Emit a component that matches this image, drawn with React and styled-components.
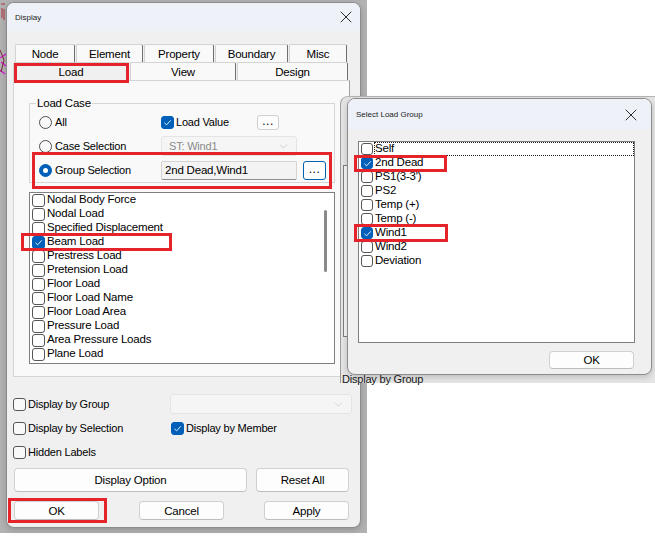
import styled, { createGlobalStyle, css } from 'styled-components';
import { X, ChevronDown } from 'lucide-react';

const GlobalStyle = createGlobalStyle`
  * { box-sizing: border-box; }
  html, body { margin: 0; padding: 0; background: #ffffff; }
  body {
    font-family: "Liberation Sans", Arial, sans-serif;
    font-size: 11px;
    letter-spacing: -0.2px;
    color: #000;
  }
`;

const RED = '#e4232b';

// red annotation frame drawn over a part
const marked = css`
  position: relative;
  ${p => p.$mark && css`
    &::after {
      content: '';
      position: absolute;
      top: ${p.$mark.top}px;
      bottom: ${p.$mark.bottom}px;
      left: ${p.$mark.left}px;
      ${p.$mark.width != null ? `width: ${p.$mark.width}px;` : `right: ${p.$mark.right}px;`}
      border: 3px solid ${RED};
      pointer-events: none;
      z-index: 5;
    }
  `}
`;

const Desktop = styled.div`
  position: relative;
  width: 655px;
  height: 543px;
  background: #ffffff;
  overflow: hidden;
`;

const Backdrop = styled.div`
  position: absolute;
  left: 0;
  top: 0;
  width: 367px;
  height: 533px;
  background: #b2b2b2;
`;

const Scribble = styled.svg`
  position: absolute;
  left: 0;
  top: 0;
`;

const Window = styled.div`
  position: absolute;
  left: ${p => p.$x}px;
  top: ${p => p.$y}px;
  width: ${p => p.$w}px;
  height: ${p => p.$h}px;
  z-index: ${p => p.$z};
  background: #f0f0f0;
  border: 1px solid #8c8c8c;
  border-radius: 8px;
  overflow: hidden;
  display: flex;
  flex-direction: column;
  box-shadow: 0 2px 6px rgba(0, 0, 0, 0.18);
`;

const BehindWindow = styled.div`
  position: absolute;
  left: 340px;
  top: 96px;
  width: 315px;
  height: 287px;
  z-index: 2;
  background: #e5e5e5;
  border-left: 1px solid #9d9d9d;
  border-top: 1px solid #b5b5b5;
  border-top-left-radius: 8px;
  display: flex;
  flex-direction: column;
`;

const GhostList = styled.div`
  margin: 68px 0 0 2px;
  width: 20px;
  height: 172px;
  border: 1px solid #7d7d7d;
  background: #f7f7f7;
`;

const GhostLabel = styled.div`
  margin-top: auto;
  margin-bottom: -3px;
  line-height: 14px;
  padding-left: 1px;
  color: #1a1a1a;
`;

const TitleBar = styled.div`
  flex: none;
  height: ${p => p.$h}px;
  background: #eef2f8;
  display: flex;
  align-items: center;
  justify-content: space-between;
  padding: 0 ${p => p.$pr}px 0 8px;
  font-size: 8px;
  letter-spacing: 0;
  color: #222;
`;

const Body = styled.div`
  padding: 13px 8px 0 6px;
  display: flex;
  flex-direction: column;
`;

const TabRow = styled.div`
  display: flex;
  gap: 1px;
  height: 18px;
  margin-left: ${p => p.$indent || 0}px;
`;

const Tab = styled.div`
  ${marked}
  flex: none;
  width: ${p => p.$w}px;
  height: 18px;
  display: flex;
  align-items: center;
  justify-content: center;
  background: ${p => (p.$active ? '#f0f0f0' : '#f9f9f9')};
  border: 1px solid #d3d3d3;
  border-right: 1px solid #6e6e6e;
  border-bottom: none;
  border-radius: 2px 2px 0 0;
  font-size: 11.5px;
`;

const Panel = styled.div`
  width: 337px;
  height: 297px;
  background: #f9f9f9;
  border: 1px solid #d4d4d4;
  border-right-color: #a0a0a0;
  padding: 15px 0 0 15px;
`;

const Group = styled.fieldset`
  width: 306px;
  margin: 0;
  padding: 0 0 0 9px;
  border: 1px solid #d6d6d6;
  border-radius: 0;
`;

const Legend = styled.legend`
  margin-left: -3px;
  padding: 0 1px;
  line-height: 14px;
  font-size: 11.5px;
`;

const Row = styled.div`
  ${marked}
  display: flex;
  align-items: center;
  height: ${p => p.$h || 24}px;
`;

const LeftCell = styled.div`
  flex: none;
  width: ${p => p.$w}px;
  display: flex;
  align-items: center;
  gap: ${p => p.$gap || 3}px;
`;

const RightCell = styled.div`
  flex: none;
  width: ${p => p.$w}px;
  display: flex;
  align-items: center;
  justify-content: ${p => p.$between ? 'space-between' : 'flex-start'};
  gap: ${p => p.$gap || 0}px;
`;

const Inline = styled.div`
  display: flex;
  align-items: center;
  gap: ${p => p.$gap || 2}px;
`;

const RadioDot = styled.span`
  flex: none;
  width: 13px;
  height: 13px;
  border-radius: 50%;
  border: 1px solid ${p => (p.$on ? '#005fb8' : '#4f4f4f')};
  background: ${p => (p.$on ? '#005fb8' : 'transparent')};
  display: inline-flex;
  align-items: center;
  justify-content: center;
  &::after {
    content: '';
    display: ${p => (p.$on ? 'block' : 'none')};
    width: 5px;
    height: 5px;
    border-radius: 50%;
    background: #fff;
  }
`;

const Box = styled.span`
  flex: none;
  width: ${p => p.$size}px;
  height: ${p => p.$size}px;
  border-radius: 3px;
  border: 1px solid ${p => (p.$on ? '#005fb8' : '#555555')};
  background: ${p => (p.$on ? '#005fb8' : 'rgba(255,255,255,0.6)')};
  display: inline-flex;
  align-items: center;
  justify-content: center;
`;

const CheckBox = ({ on, size = 13 }) => (
  <Box $on={on} $size={size}>
    {on && (
      <svg width="9" height="9" viewBox="0 0 10 10">
        <path d="M1.6 5.3 L4 7.6 L8.6 2.6" fill="none" stroke="#fff" strokeWidth="1" />
      </svg>
    )}
  </Box>
);

const SmallButton = styled.div`
  flex: none;
  width: ${p => p.$w}px;
  height: ${p => p.$h}px;
  border-radius: 3px;
  background: #fdfdfd;
  border: ${p => (p.$focus ? '1.5px solid #0063b1' : '1px solid #cfcfcf')};
  display: flex;
  align-items: center;
  justify-content: center;
  font-size: 12px;
  letter-spacing: 0.5px;
  line-height: 1;
  padding-bottom: 2px;
`;

const Combo = styled.div`
  flex: none;
  width: ${p => p.$w}px;
  height: 20px;
  border-radius: 3px;
  background: #f5f5f5;
  border: 1px solid #e4e4e4;
  color: #8a8a8a;
  display: flex;
  align-items: center;
  justify-content: space-between;
  padding: 0 6px 0 7px;
`;

const TextBox = styled.div`
  flex: none;
  width: 136px;
  height: 19px;
  border-radius: 2px;
  background: #f3f3f3;
  border: 1px solid #d3d3d3;
  border-bottom-color: #8d8d8d;
  display: flex;
  align-items: center;
  padding-left: 3px;
  font-size: 11.5px;
`;

const List = styled.div`
  width: ${p => p.$w}px;
  height: ${p => p.$h}px;
  margin: ${p => p.$m};
  background: #ffffff;
  border: 1px solid #7f7f7f;
  display: flex;
`;

const Items = styled.div`
  flex: 1;
  display: flex;
  flex-direction: column;
`;

const Item = styled.div`
  ${marked}
  height: 14px;
  display: flex;
  align-items: center;
  padding-left: 2px;
  gap: 1px;
  font-size: 11.5px;
`;

const ItemText = styled.span`
  flex: ${p => (p.$focus ? 1 : 'none')};
  height: 14px;
  line-height: 13px;
  padding-left: 1px;
  outline: ${p => (p.$focus ? '1px dotted #222' : 'none')};
  outline-offset: -1px;
`;

const ScrollTrack = styled.div`
  flex: none;
  width: 17px;
  padding: 17px 0 0 7px;
`;

const Thumb = styled.div`
  width: 3px;
  height: 62px;
  border-radius: 2px;
  background: #8a8a8a;
`;

const Options = styled.div`
  margin-top: 15px;
  display: flex;
  flex-direction: column;
`;

const ButtonRow = styled.div`
  display: flex;
  margin-top: ${p => p.$mt}px;
  padding-left: 1px;
  width: 336px;
  justify-content: space-between;
`;

const Button = styled.div`
  ${marked}
  flex: none;
  width: ${p => p.$w}px;
  height: ${p => p.$h}px;
  background: #fdfdfd;
  border: 1px solid #d0d0d0;
  border-bottom-color: #bdbdbd;
  border-radius: 4px;
  display: flex;
  align-items: center;
  justify-content: center;
  font-size: 11.5px;
`;

const DialogFoot = styled.div`
  display: flex;
  justify-content: flex-end;
  padding: 8px 17px 0 0;
`;

const CloseIcon = () => <X size={20} strokeWidth={1.1} color="#1b1b1b" />;

const loadItems = [
  'Nodal Body Force',
  'Nodal Load',
  'Specified Displacement',
  'Beam Load',
  'Prestress Load',
  'Pretension Load',
  'Floor Load',
  'Floor Load Name',
  'Floor Load Area',
  'Pressure Load',
  'Area Pressure Loads',
  'Plane Load',
];

const groups = [
  { name: 'Self', focus: true },
  { name: '2nd Dead', on: true, mark: { top: -1, bottom: -2, left: -5, width: 87 } },
  { name: "PS1(3-3')" },
  { name: 'PS2' },
  { name: 'Temp (+)' },
  { name: 'Temp (-)' },
  { name: 'Wind1', on: true, mark: { top: -2, bottom: -2, left: -5, width: 88 } },
  { name: 'Wind2' },
  { name: 'Deviation' },
];

const MainDialog = () => (
  <Window $x={6} $y={2} $w={355} $h={526} $z={1}>
    <TitleBar $h={28} $pr={4}>
      <span>Display</span>
      <CloseIcon />
    </TitleBar>
    <Body>
      <TabRow $indent={2}>
        <Tab $w={60}>Node</Tab>
        <Tab $w={67}>Element</Tab>
        <Tab $w={70}>Property</Tab>
        <Tab $w={73}>Boundary</Tab>
        <Tab $w={58}>Misc</Tab>
      </TabRow>
      <TabRow>
        <Tab $w={116} $active $mark={{ top: 0, bottom: -3, left: 0, right: -1 }}>Load</Tab>
        <Tab $w={106}>View</Tab>
        <Tab $w={111}>Design</Tab>
      </TabRow>
      <Panel>
        <Group>
          <Legend>Load Case</Legend>
          <Row>
            <LeftCell $w={122}><RadioDot />All</LeftCell>
            <RightCell $w={118} $between>
              <Inline><CheckBox on />Load Value</Inline>
              <SmallButton $w={22} $h={15}>...</SmallButton>
            </RightCell>
          </Row>
          <Row>
            <LeftCell $w={122}><RadioDot />Case Selection</LeftCell>
            <Combo $w={136}>
              <span>ST: Wind1</span>
              <ChevronDown size={13} strokeWidth={1} color="#b5b5b5" />
            </Combo>
          </Row>
          <Row $mark={{ top: -6, bottom: -7, left: -7, right: 2 }}>
            <LeftCell $w={122}><RadioDot $on />Group Selection</LeftCell>
            <RightCell $w={165} $gap={6}>
              <TextBox>2nd Dead,Wind1</TextBox>
              <SmallButton $w={23} $h={19} $focus>...</SmallButton>
            </RightCell>
          </Row>
        </Group>
        <List $w={306} $h={172} $m="9px 0 0 0">
          <Items>
            {loadItems.map(name => (
              <Item
                key={name}
                $mark={name === 'Beam Load' ? { top: -2, bottom: -2, left: -9, width: 145 } : null}
              >
                <CheckBox on={name === 'Beam Load'} />
                <ItemText>{name}</ItemText>
              </Item>
            ))}
          </Items>
          <ScrollTrack>
            <Thumb />
          </ScrollTrack>
        </List>
      </Panel>
      <Options>
        <Row>
          <LeftCell $w={157} $gap={2}><CheckBox />Display by Group</LeftCell>
          <Combo $w={182}>
            <span />
            <ChevronDown size={13} strokeWidth={1} color="#b5b5b5" />
          </Combo>
        </Row>
        <Row>
          <LeftCell $w={158} $gap={2}><CheckBox />Display by Selection</LeftCell>
          <Inline><CheckBox on />Display by Member</Inline>
        </Row>
        <Row>
          <LeftCell $w={158} $gap={2}><CheckBox />Hidden Labels</LeftCell>
        </Row>
      </Options>
      <ButtonRow $mt={4}>
        <Button $w={233} $h={24}>Display Option</Button>
        <Button $w={93} $h={24}>Reset All</Button>
      </ButtonRow>
      <ButtonRow $mt={9}>
        <Button $w={85} $h={19} $mark={{ top: -4, bottom: -4, left: -7, right: -9 }}>OK</Button>
        <Button $w={85} $h={19}>Cancel</Button>
        <Button $w={85} $h={19}>Apply</Button>
      </ButtonRow>
    </Body>
  </Window>
);

const GroupDialog = () => (
  <Window $x={347} $y={98} $w={305} $h={277} $z={3}>
    <TitleBar $h={31} $pr={10}>
      <span>Select Load Group</span>
      <CloseIcon />
    </TitleBar>
    <List $w={277} $h={202} $m="11px 0 0 10px">
      <Items>
        {groups.map(g => (
          <Item key={g.name} $mark={g.mark}>
            <CheckBox on={g.on} size={12} />
            <ItemText $focus={g.focus}>{g.name}</ItemText>
          </Item>
        ))}
      </Items>
    </List>
    <DialogFoot>
      <Button $w={85} $h={18}>OK</Button>
    </DialogFoot>
  </Window>
);

export default function App() {
  return (
    <>
      <GlobalStyle />
      <Desktop>
        <Backdrop>
          <Scribble width="8" height="90" viewBox="0 0 8 90">
            <path d="M1 4 L5 4 M2 8 L2 18 M4 9 L4 20" stroke="#b0303a" strokeWidth="1" />
            <path d="M0 58 L6 54 M1 62 L6 66 M0 70 L5 74" stroke="#d81bd8" strokeWidth="1.4" />
            <path d="M0 50 L4 60 L1 72" stroke="#7a2a30" strokeWidth="1" fill="none" />
          </Scribble>
        </Backdrop>
        <MainDialog />
        <BehindWindow>
          <GhostList />
          <GhostLabel>Display by Group</GhostLabel>
        </BehindWindow>
        <GroupDialog />
      </Desktop>
    </>
  );
}
